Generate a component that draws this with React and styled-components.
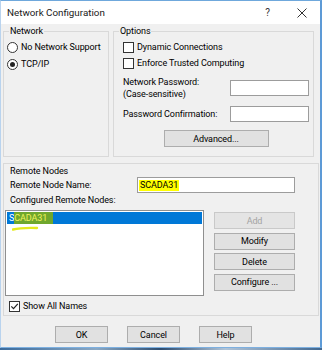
import React from "react";
import styled, { createGlobalStyle } from "styled-components";

const UI_FONT = `Roboto, "Liberation Sans", Arial, sans-serif`;

const GlobalStyle = createGlobalStyle`
  html, body {
    margin: 0;
    padding: 0;
    background: #f0f0f0;
  }
  body {
    font-family: ${UI_FONT};
    font-size: 9px;
    letter-spacing: -0.1px;
    color: #000;
  }
  * {
    box-sizing: border-box;
  }
`;

export const Window = styled.div`
  width: 322px;
  height: 348px;
  display: flex;
  flex-direction: column;
  background: #f0f0f0;
  border-top: 1px solid #6fa8dc;
  border-left: 1px solid #b9d3ee;
  border-right: 2px solid #5d9ad6;
  border-bottom: 1px solid #7eb0e0;
`;

export const Desktop = styled.div`
  height: 2px;
  background: linear-gradient(
    to right,
    #3b6b9c,
    #8aa8c4 30%,
    #2d4c6f 50%,
    #b0c4d8 70%,
    #41678f
  );
`;

export const TitleBar = styled.div`
  height: 23px;
  flex: none;
  display: flex;
  align-items: center;
  padding: 0 13px 0 6px;
  background: #fff;
`;

export const Title = styled.span`
  font-size: 9.8px;
  letter-spacing: 0;
  color: #1a1a1a;
`;

export const Caption = styled.div`
  margin-left: auto;
  display: flex;
  align-items: center;
  gap: 27px;
  color: #333;
`;

export const HelpGlyph = styled.span`
  font-size: 10px;
`;

export const Body = styled.div`
  flex: 1;
  display: flex;
  flex-direction: column;
  padding: 1px 0 0 2px;
`;

export const TopRow = styled.div`
  display: flex;
  gap: 4px;
`;

export const Group = styled.fieldset`
  margin: 0;
  padding: 0;
  min-width: 0;
  width: ${(p) => p.$w}px;
  height: ${(p) => p.$h}px;
  margin-top: ${(p) => p.$mt || 0}px;
  border: 1px solid #d9d9d9;
`;

export const Legend = styled.legend`
  margin-left: 5px;
  padding: 0 1px;
  font-size: 9px;
  line-height: 12px;
`;

export const GroupBody = styled.div`
  display: flex;
  flex-direction: column;
  padding: ${(p) => p.$pad};
`;

export const OptionRow = styled.label`
  display: flex;
  align-items: center;
  gap: 3px;
  height: 14px;
  white-space: nowrap;
  margin-top: ${(p) => p.$mt || 0}px;
  margin-left: ${(p) => p.$ml || 0}px;
`;

export const Radio = styled.span`
  flex: none;
  width: 11px;
  height: 11px;
  border: 1px solid #333;
  border-radius: 50%;
  background: #fff;
  display: inline-flex;
  align-items: center;
  justify-content: center;
  &::after {
    content: "";
    width: 5px;
    height: 5px;
    border-radius: 50%;
    background: ${(p) => (p.$checked ? "#222" : "transparent")};
  }
`;

export const Box = styled.span`
  flex: none;
  width: 11px;
  height: 11px;
  border: 1px solid #333;
  background: #fff;
  display: inline-flex;
  align-items: center;
  justify-content: center;
`;

export const FieldRow = styled.div`
  display: flex;
  align-items: ${(p) => p.$align || "center"};
  margin-top: ${(p) => p.$mt || 0}px;
`;

export const FieldLabel = styled.div`
  line-height: 12px;
  white-space: nowrap;
  width: ${(p) => (p.$w ? `${p.$w}px` : "auto")};
  margin-left: ${(p) => p.$ml || 0}px;
`;

export const TextBox = styled.div`
  width: ${(p) => p.$w}px;
  height: 16px;
  flex: none;
  margin-left: ${(p) => (p.$push ? "auto" : "0")};
  margin-top: ${(p) => p.$mt || 0}px;
  display: flex;
  align-items: center;
  padding-left: 1px;
  background: #fff;
  border: 1px solid #9c9c9c;
`;

export const Marker = styled.span`
  background: #ffff00;
  padding: 0 1px;
  line-height: 11px;
`;

export const PushButton = styled.button`
  width: ${(p) => p.$w}px;
  height: 17px;
  padding: 0;
  flex: none;
  align-self: ${(p) => p.$align || "auto"};
  margin-top: ${(p) => p.$mt || 0}px;
  font-family: inherit;
  font-size: 9px;
  letter-spacing: -0.1px;
  color: ${(p) => (p.disabled ? "#a3a3a3" : "#000")};
  background: ${(p) => (p.disabled ? "#e4e4e4" : "#e1e1e1")};
  border: 1px solid ${(p) => (p.disabled ? "#c9c9c9" : "#adadad")};
  border-radius: 0;
`;

export const SectionLabel = styled.div`
  line-height: ${(p) => p.$lh || 12}px;
  margin-left: 5px;
  margin-top: ${(p) => p.$mt || 0}px;
`;

export const ListRow = styled.div`
  display: flex;
  gap: 10px;
  margin-top: 4px;
`;

export const ListBox = styled.div`
  position: relative;
  width: 199px;
  height: 86px;
  padding: 1px;
  background: #fff;
  border: 1px solid #8f8f8f;
`;

export const ListItem = styled.div`
  height: 12px;
  line-height: 12px;
  padding-left: 2px;
  display: flex;
  color: ${(p) => (p.$selected ? "#fff" : "#000")};
  background: ${(p) => (p.$selected ? "#0078d7" : "transparent")};
`;

export const ItemMarker = styled.span`
  background: #6fa72c;
  color: #f0f35c;
  padding-right: 6px;
`;

export const Scribble = styled.svg`
  position: absolute;
  left: 6px;
  top: 14px;
`;

export const SideButtons = styled.div`
  display: flex;
  flex-direction: column;
  gap: 3.5px;
  margin-top: 2px;
`;

export const Footer = styled.div`
  display: flex;
  gap: 19px;
  padding-left: 52px;
  margin-top: 10px;
`;

const CloseIcon = () => (
  <svg width="10" height="10" viewBox="0 0 10 10">
    <path d="M0.5 0.5 L9.5 9.5 M9.5 0.5 L0.5 9.5" stroke="#333" strokeWidth="1" fill="none" />
  </svg>
);

const Check = () => (
  <svg width="9" height="9" viewBox="0 0 9 9">
    <path d="M1.3 4.4 L3.5 6.7 L7.8 1.8" stroke="#222" strokeWidth="1.2" fill="none" />
  </svg>
);

export default function App() {
  return (
    <>
      <GlobalStyle />
      <Window>
        <TitleBar>
          <Title>Network Configuration</Title>
          <Caption>
            <HelpGlyph>?</HelpGlyph>
            <CloseIcon />
          </Caption>
        </TitleBar>
        <Body>
          <TopRow>
            <Group $w={106} $h={132}>
              <Legend>Network</Legend>
              <GroupBody $pad="3px 0 0 3px">
                <OptionRow>
                  <Radio />
                  No Network Support
                </OptionRow>
                <OptionRow $mt={3}>
                  <Radio $checked />
                  TCP/IP
                </OptionRow>
              </GroupBody>
            </Group>
            <Group $w={201} $h={132}>
              <Legend>Options</Legend>
              <GroupBody $pad="3px 4px 0 9px">
                <OptionRow>
                  <Box />
                  Dynamic Connections
                </OptionRow>
                <OptionRow $mt={2}>
                  <Box />
                  Enforce Trusted Computing
                </OptionRow>
                <FieldRow $align="flex-start" $mt={6}>
                  <FieldLabel>
                    Network Password:
                    <br />
                    (Case-sensitive)
                  </FieldLabel>
                  <TextBox $w={79} $push $mt={4} />
                </FieldRow>
                <FieldRow $mt={6}>
                  <FieldLabel>Password Confirmation:</FieldLabel>
                  <TextBox $w={79} $push />
                </FieldRow>
                <PushButton $w={105} $align="center" $mt={8}>
                  Advanced...
                </PushButton>
              </GroupBody>
            </Group>
          </TopRow>

          <Group $w={316} $h={153} $mt={6}>
            <GroupBody $pad="2px 0 0 1px">
              <SectionLabel $lh={11}>Remote Nodes</SectionLabel>
              <FieldRow>
                <FieldLabel $w={127} $ml={5}>
                  Remote Node Name:
                </FieldLabel>
                <TextBox $w={158}>
                  <Marker>SCADA31</Marker>
                </TextBox>
              </FieldRow>
              <SectionLabel $mt={1}>Configured Remote Nodes:</SectionLabel>
              <ListRow>
                <ListBox>
                  <ListItem $selected>
                    S<ItemMarker>CADA31</ItemMarker>
                  </ListItem>
                  <Scribble width="28" height="6" viewBox="0 0 28 6">
                    <path d="M1 4.5 Q 9 2.5 25 3" stroke="#e4ea1c" strokeWidth="2.4" fill="none" strokeLinecap="round" />
                  </Scribble>
                </ListBox>
                <SideButtons>
                  <PushButton $w={81} disabled>
                    Add
                  </PushButton>
                  <PushButton $w={81}>Modify</PushButton>
                  <PushButton $w={81}>Delete</PushButton>
                  <PushButton $w={81}>Configure ...</PushButton>
                </SideButtons>
              </ListRow>
              <OptionRow $mt={3} $ml={4}>
                <Box>
                  <Check />
                </Box>
                Show All Names
              </OptionRow>
            </GroupBody>
          </Group>

          <Footer>
            <PushButton $w={53}>OK</PushButton>
            <PushButton $w={53}>Cancel</PushButton>
            <PushButton $w={53}>Help</PushButton>
          </Footer>
        </Body>
      </Window>
      <Desktop />
    </>
  );
}
